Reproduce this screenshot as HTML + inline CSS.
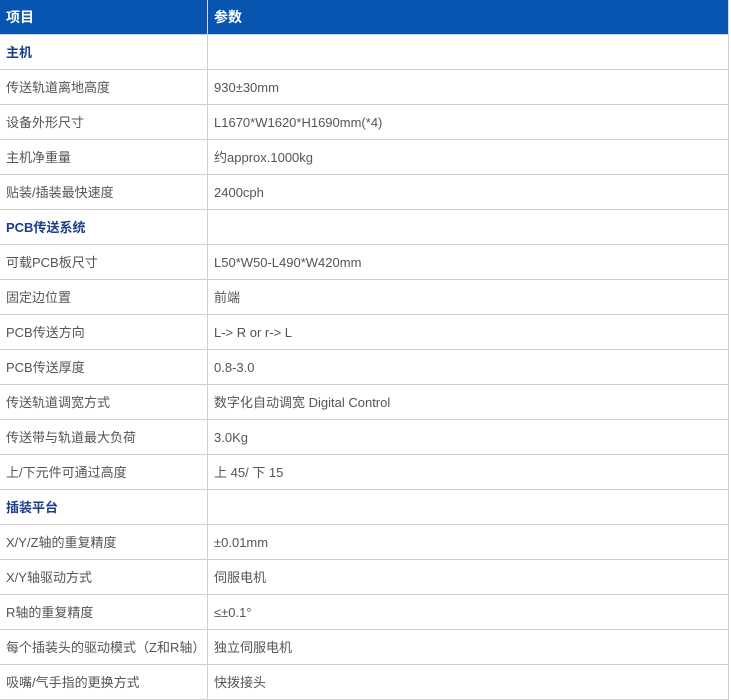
<!DOCTYPE html>
<html><head><meta charset="utf-8"><style>
body{margin:0;background:#fff;width:731px;height:700px;overflow:hidden;font-family:"Liberation Sans","Noto Sans CJK SC",sans-serif;}
.r{position:absolute;left:0;width:729px;height:35px;border-bottom:1px solid #cfcfcf;box-sizing:border-box;}
.c{position:absolute;top:0;height:34px;line-height:35px;font-size:13px;color:#555;padding-left:6px;box-sizing:border-box;}
.a{left:0;width:208px;border-right:1px solid #cfcfcf;}
.b{left:208px;width:521px;border-right:1px solid #cfcfcf;padding-left:6px;}
.h{background:#0755b0;}
.h .c{color:#fff;font-weight:bold;font-size:14px;border-right-color:#d0d8e8;}
.s .a{color:#1b3e8c;font-weight:bold;}
</style></head><body>
<div class="r h" style="top:0"><div class="c a">项目</div><div class="c b">参数</div></div>
<div class="r s" style="top:35px"><div class="c a">主机</div><div class="c b"></div></div>
<div class="r" style="top:70px"><div class="c a">传送轨道离地高度</div><div class="c b">930±30mm</div></div>
<div class="r" style="top:105px"><div class="c a">设备外形尺寸</div><div class="c b">L1670*W1620*H1690mm(*4)</div></div>
<div class="r" style="top:140px"><div class="c a">主机净重量</div><div class="c b">约approx.1000kg</div></div>
<div class="r" style="top:175px"><div class="c a">贴装/插装最快速度</div><div class="c b">2400cph</div></div>
<div class="r s" style="top:210px"><div class="c a">PCB传送系统</div><div class="c b"></div></div>
<div class="r" style="top:245px"><div class="c a">可载PCB板尺寸</div><div class="c b">L50*W50-L490*W420mm</div></div>
<div class="r" style="top:280px"><div class="c a">固定边位置</div><div class="c b">前端</div></div>
<div class="r" style="top:315px"><div class="c a">PCB传送方向</div><div class="c b">L-&gt; R or r-&gt; L</div></div>
<div class="r" style="top:350px"><div class="c a">PCB传送厚度</div><div class="c b">0.8-3.0</div></div>
<div class="r" style="top:385px"><div class="c a">传送轨道调宽方式</div><div class="c b">数字化自动调宽 Digital Control</div></div>
<div class="r" style="top:420px"><div class="c a">传送带与轨道最大负荷</div><div class="c b">3.0Kg</div></div>
<div class="r" style="top:455px"><div class="c a">上/下元件可通过高度</div><div class="c b">上 45/ 下 15</div></div>
<div class="r s" style="top:490px"><div class="c a">插装平台</div><div class="c b"></div></div>
<div class="r" style="top:525px"><div class="c a">X/Y/Z轴的重复精度</div><div class="c b">±0.01mm</div></div>
<div class="r" style="top:560px"><div class="c a">X/Y轴驱动方式</div><div class="c b">伺服电机</div></div>
<div class="r" style="top:595px"><div class="c a">R轴的重复精度</div><div class="c b">≤±0.1°</div></div>
<div class="r" style="top:630px"><div class="c a">每个插装头的驱动模式（Z和R轴）</div><div class="c b">独立伺服电机</div></div>
<div class="r" style="top:665px"><div class="c a">吸嘴/气手指的更换方式</div><div class="c b">快拨接头</div></div>
</body></html>
